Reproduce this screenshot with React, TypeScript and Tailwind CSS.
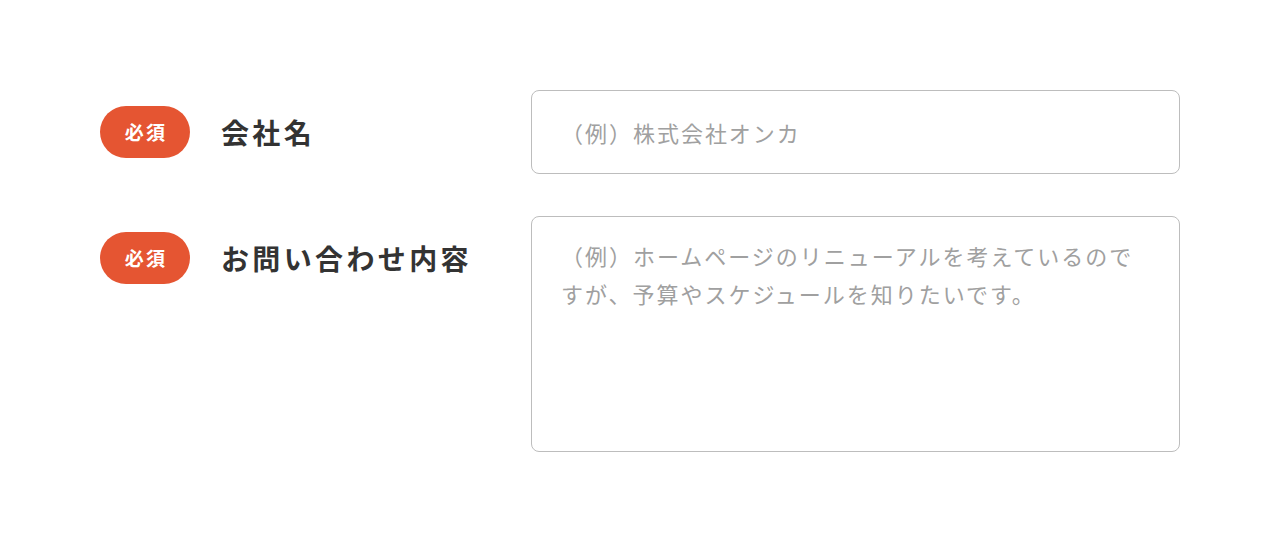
import React from "react";

const jp = "font-['Noto_Sans_CJK_JP','Noto_Sans',sans-serif]";

function Required() {
  return (
    <span className="flex h-[52px] w-[90px] shrink-0 items-center justify-center rounded-full bg-[#e55532] pl-[2px] text-[19px] font-bold tracking-[0.12em] text-white">
      必須
    </span>
  );
}

function Label({ children }: { children: React.ReactNode }) {
  return (
    <div className="flex w-[431px] shrink-0 items-center gap-[31px]">
      <Required />
      <span className="text-[28px] font-bold tracking-[0.12em] text-[#333333]">{children}</span>
    </div>
  );
}

export default function App() {
  return (
    <div className={`${jp} min-h-[542px] w-full bg-white px-[100px] pt-[90px]`}>
      <form className="flex flex-col gap-[42px]">
        <div className="flex items-center">
          <Label>会社名</Label>
          <input
            type="text"
            placeholder="（例）株式会社オンカ"
            className="h-[84px] flex-1 rounded-[8px] border border-[#bdbdbd] px-[29px] text-[22px] tracking-[0.09em] text-[#333333] outline-none placeholder:text-[#a0a0a0]"
          />
        </div>
        <div className="flex items-start">
          <div className="pt-[16px]">
            <Label>お問い合わせ内容</Label>
          </div>
          <textarea
            placeholder="（例）ホームページのリニューアルを考えているのですが、予算やスケジュールを知りたいです。"
            className="h-[236px] flex-1 resize-none rounded-[8px] border border-[#bdbdbd] px-[29px] pt-[19px] text-[22px] leading-[38px] tracking-[0.09em] text-[#333333] outline-none placeholder:text-[#a0a0a0]"
          />
        </div>
      </form>
    </div>
  );
}
